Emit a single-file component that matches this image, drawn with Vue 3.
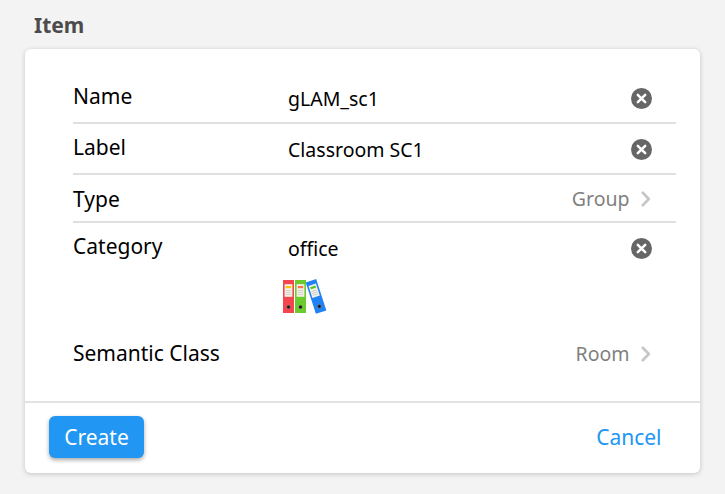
<template>
  <div class="page">
    <h2 class="block-title">Item</h2>
    <div class="card">
      <ul class="fields">
        <li
          v-for="field in fields"
          :key="field.key"
          class="field"
          :class="[field.key, { link: field.link }]"
        >
          <div class="field-inner">
            <span class="label">{{ field.label }}</span>
            <template v-if="field.link">
              <span class="after">{{ field.value }}</span>
              <svg class="chevron" viewBox="0 0 10 16">
                <path d="M1.8 1.8 7.8 8l-6 6.2" />
              </svg>
            </template>
            <template v-else>
              <span class="value">{{ field.value }}</span>
              <button class="clear" type="button" @click="field.value = ''">
                <svg viewBox="0 0 22 22">
                  <circle cx="11.5" cy="11.5" r="10.5" />
                  <path d="M7.8 7.8l7.4 7.4M15.2 7.8l-7.4 7.4" />
                </svg>
              </button>
            </template>
          </div>
          <svg v-if="field.key === 'category'" class="preview" viewBox="0 0 45 36">
            <g v-for="binder in binders" :key="binder.color" :transform="binder.transform">
              <rect width="11" height="33" :fill="binder.color" />
              <rect x="1.6" y="4.2" width="7.8" height="12.6" fill="#f3f0e8" />
              <rect x="2.8" y="6" width="5.4" height="2.2" :fill="binder.tag" />
              <path class="lines" d="M2.8 10.5h5.4M2.8 12.5h5.4M2.8 14.5h5.4" />
              <circle cx="5.5" cy="27" r="2.1" fill="#777" />
              <circle cx="5.5" cy="27" r="1.5" fill="#151515" />
            </g>
          </svg>
        </li>
      </ul>
      <div class="card-footer">
        <button class="create" type="button">Create</button>
        <a class="cancel">Cancel</a>
      </div>
    </div>
  </div>
</template>

<script setup>
import { ref } from "vue";

const fields = ref([
  { key: "name", label: "Name", value: "gLAM_sc1" },
  { key: "item-label", label: "Label", value: "Classroom SC1" },
  { key: "type", label: "Type", value: "Group", link: true },
  { key: "category", label: "Category", value: "office" },
  { key: "semantic", label: "Semantic Class", value: "Room", link: true },
]);

const binders = [
  { color: "#f4444e", tag: "#ffc800", transform: "translate(0 1)" },
  { color: "#6bcb2d", tag: "#ff7350", transform: "translate(12 1)" },
  { color: "#2081f5", tag: "#55c51c", transform: "translate(22.7 3.4) rotate(-18)" },
];
</script>

<style>
body {
  background: #f3f3f3;
}
</style>

<style scoped>
.page {
  box-sizing: border-box;
  height: 494px;
  padding: 10px 25px 0;
  font-family: "Noto Sans", sans-serif;
  font-size: 21px;
  line-height: 30px;
  color: #000;
}

.block-title {
  margin: 0 0 9px;
  padding-left: 9px;
  font-size: 21px;
  font-weight: 700;
  color: #4b4b4b;
}

.card {
  box-sizing: border-box;
  display: flex;
  flex-direction: column;
  height: 424px;
  background: #fff;
  border-radius: 6px;
  box-shadow: 0 1px 5px rgba(0, 0, 0, 0.2);
}

.fields {
  flex: 1;
  margin: 0;
  padding: 24px 24px 0 48px;
  list-style: none;
}

.field {
  box-sizing: border-box;
  height: 51px;
  padding: 8px 24px 0 0;
  border-bottom: 2px solid #e0e0e0;
}

.field.type {
  height: 48px;
  padding-top: 9px;
}

.field.category {
  height: 107px;
  border-bottom: none;
}

.field.semantic {
  border-bottom: none;
}

.field-inner {
  display: flex;
  align-items: flex-start;
}

.label {
  width: 215px;
}

.link .label {
  flex: 1;
  width: auto;
}

.value {
  flex: 1;
  padding-top: 3px;
  font-size: 19.5px;
}

.after {
  font-size: 19.5px;
  color: #7f7f7f;
}

.semantic .after {
  padding-top: 1px;
}

.chevron {
  width: 10px;
  height: 16px;
  margin: 7px 1px 0 11.5px;
  fill: none;
  stroke: #c7c7c7;
  stroke-width: 2.7;
  stroke-linecap: round;
  stroke-linejoin: round;
}

.semantic .chevron {
  margin-top: 8px;
}

.clear {
  width: 22px;
  height: 22px;
  margin-top: 6px;
  padding: 0;
  border: none;
  background: none;
}

.clear svg {
  display: block;
  fill: #666;
}

.clear path {
  stroke: #fff;
  stroke-width: 2.5;
  stroke-linecap: round;
}

.preview {
  display: block;
  width: 45px;
  height: 36px;
  margin: 15px 0 0 210px;
}

.lines {
  fill: none;
  stroke: #c9c9c4;
  stroke-width: 0.8;
}

.card-footer {
  box-sizing: border-box;
  display: flex;
  align-items: flex-start;
  justify-content: space-between;
  height: 72px;
  padding: 13px 38.5px 0 24px;
  border-top: 2px solid #e3e3e3;
}

.create {
  width: 95px;
  height: 42px;
  padding: 0;
  border: none;
  border-radius: 6px;
  background: #2196f3;
  box-shadow: 0 2px 4px rgba(0, 0, 0, 0.35);
  font: inherit;
  line-height: 42px;
  color: #fff;
}

.cancel {
  line-height: 42px;
  color: #2196f3;
}
</style>
